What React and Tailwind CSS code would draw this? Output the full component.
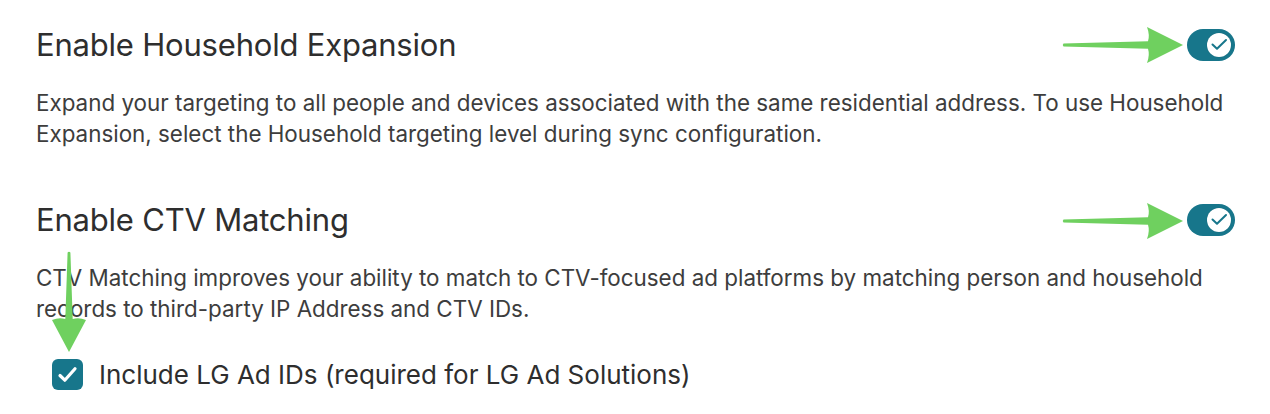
import React from "react";

const font = { fontFamily: "Inter, 'Noto Sans', sans-serif" };

function Toggle() {
  return (
    <div className="relative flex h-[32px] w-[48px] shrink-0 items-center justify-end rounded-full bg-[#17768b] pr-[4px]">
      <div className="flex h-[24px] w-[24px] items-center justify-center rounded-full bg-white shadow-[0_0_1px_rgba(0,0,0,0.2)]">
        <svg width="24" height="24" viewBox="0 0 24 24" fill="none">
          <path d="M5.5 11.5 L10 15.8 L19 7" stroke="#17768b" strokeWidth="2" strokeLinecap="round" strokeLinejoin="round" />
        </svg>
      </div>
    </div>
  );
}

function ArrowRight({ className }) {
  return (
    <svg className={className} width="124" height="36" viewBox="0 0 124 36" fill="none">
      <path d="M1.5 16.6 L86 14.3 Q88 8 85 0 L121 18 L85 36 Q88 28 86 21.7 L1.5 19.4 Q0 18 1.5 16.6 Z" fill="#6fd05f" />
    </svg>
  );
}

function ArrowDown({ className }) {
  return (
    <svg className={className} width="36" height="104" viewBox="0 0 36 104" fill="none">
      <path d="M16.6 1.5 Q18 0 19.4 1.5 L21.7 68 Q28 66 35 69 L18 101 L1 69 Q8 66 14.3 68 Z" fill="#6fd05f" />
    </svg>
  );
}

export default function App() {
  return (
    <div className="relative h-[414px] w-[1270px] overflow-hidden bg-white text-[#333]" style={font}>
      <div className="flex flex-col pl-[36px] pr-[35px] pt-[27px]">
        <div className="flex items-center justify-between">
          <h2 className="text-[31px] leading-[36px] tracking-[-0.2px] text-[#2e2e2e]">Enable Household Expansion</h2>
          <Toggle />
        </div>
        <p className="mt-[24px] max-w-[1195px] text-[22.4px] leading-[31px] text-[#3d3d3d]">
          Expand your targeting to all people and devices associated with the same residential address. To use Household Expansion, select the Household targeting level during sync configuration.
        </p>

        <div className="mt-[53px] flex items-center justify-between">
          <h2 className="text-[31px] leading-[36px] tracking-[-0.2px] text-[#2e2e2e]">Enable CTV Matching</h2>
          <Toggle />
        </div>
        <p className="mt-[24px] max-w-[1195px] text-[22.4px] leading-[31px] text-[#3d3d3d]">
          CTV Matching improves your ability to match to CTV-focused ad platforms by matching person and household records to third-party IP Address and CTV IDs.
        </p>

        <label className="mt-[35px] flex items-center gap-[16px] pl-[16px]">
          <span className="flex h-[31px] w-[31px] items-center justify-center rounded-[6px] bg-[#17768b]">
            <svg width="31" height="31" viewBox="0 0 31 31" fill="none">
              <path d="M8 16.5 L12.8 21.2 L23 9.8" stroke="white" strokeWidth="3.2" strokeLinecap="round" strokeLinejoin="round" />
            </svg>
          </span>
          <span className="text-[26px] leading-[31px] text-[#2e2e2e]">Include LG Ad IDs (required for LG Ad Solutions)</span>
        </label>
      </div>

      <ArrowRight className="absolute left-[1062px] top-[27px]" />
      <ArrowRight className="absolute left-[1062px] top-[203px]" />
      <ArrowDown className="absolute left-[51px] top-[251px]" />
    </div>
  );
}
